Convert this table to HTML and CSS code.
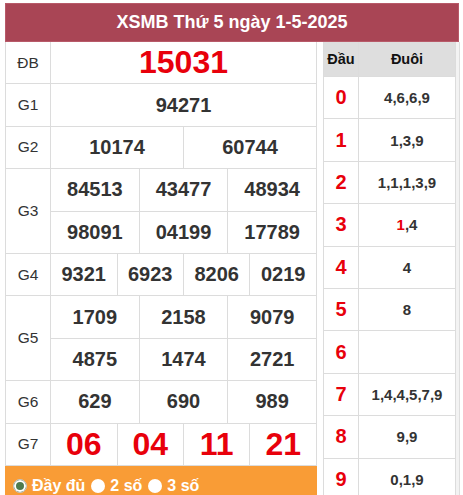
FILE: index.html
```html
<!DOCTYPE html>
<html lang="vi">
<head>
<meta charset="utf-8">
<title>XSMB</title>
<link rel="stylesheet" href="styles.css">
</head>
<body>
<div class="wrap">
  <div class="title">XSMB Thứ 5 ngày 1-5-2025</div>
  <div class="content">
    <div class="left">
      <div class="kq">
        <div class="lbl">ĐB</div>
        <div class="num db s12">15031</div>

        <div class="lbl">G1</div>
        <div class="num s12">94271</div>

        <div class="lbl">G2</div>
        <div class="num s6">10174</div>
        <div class="num s6">60744</div>

        <div class="lbl r2">G3</div>
        <div class="num s4">84513</div>
        <div class="num s4">43477</div>
        <div class="num s4">48934</div>
        <div class="num s4">98091</div>
        <div class="num s4">04199</div>
        <div class="num s4">17789</div>

        <div class="lbl">G4</div>
        <div class="num s3">9321</div>
        <div class="num s3">6923</div>
        <div class="num s3">8206</div>
        <div class="num s3">0219</div>

        <div class="lbl r2">G5</div>
        <div class="num s4">1709</div>
        <div class="num s4">2158</div>
        <div class="num s4">9079</div>
        <div class="num s4">4875</div>
        <div class="num s4">1474</div>
        <div class="num s4">2721</div>

        <div class="lbl">G6</div>
        <div class="num s4">629</div>
        <div class="num s4">690</div>
        <div class="num s4">989</div>

        <div class="lbl">G7</div>
        <div class="num g7 s3">06</div>
        <div class="num g7 s3">04</div>
        <div class="num g7 s3">11</div>
        <div class="num g7 s3">21</div>
      </div>
      <div class="opts">
        <span class="opt"><span class="radio on"></span>Đầy đủ</span>
        <span class="opt"><span class="radio"></span>2 số</span>
        <span class="opt"><span class="radio"></span>3 số</span>
      </div>
    </div>
    <div class="right">
      <div class="lt">
        <div class="th">Đầu</div>
        <div class="th">Đuôi</div>
        <div class="dau">0</div><div class="duoi">4,6,6,9</div>
        <div class="dau">1</div><div class="duoi">1,3,9</div>
        <div class="dau">2</div><div class="duoi">1,1,1,3,9</div>
        <div class="dau">3</div><div class="duoi"><span class="red">1</span>,4</div>
        <div class="dau">4</div><div class="duoi">4</div>
        <div class="dau">5</div><div class="duoi">8</div>
        <div class="dau">6</div><div class="duoi"></div>
        <div class="dau">7</div><div class="duoi">1,4,4,5,7,9</div>
        <div class="dau">8</div><div class="duoi">9,9</div>
        <div class="dau">9</div><div class="duoi">0,1,9</div>
      </div>
    </div>
  </div>
</div>
</body>
</html>
```

FILE: styles.css
```css
html, body {
  margin: 0;
  padding: 0;
  background: #fff;
}
body {
  font-family: "Liberation Sans", Arial, sans-serif;
  color: #333;
  overflow: hidden;
}
.wrap {
  padding: 3px 0 0 5px;
  width: 454px;
}
.title {
  background: #a94555;
  color: #fff;
  font-weight: bold;
  font-size: 18px;
  height: 39px;
  line-height: 39px;
  text-align: center;
  box-shadow: inset 0 0 0 1px #b85a69;
}
.content {
  display: flex;
  gap: 6px;
  align-items: flex-start;
}
.left {
  width: 312px;
}
.kq {
  display: grid;
  grid-template-columns: 44px repeat(12, 1fr);
  grid-template-rows: repeat(10, 41.4px);
  gap: 1px;
  padding: 0 1px 1px 1px;
  background: #dcdcdc;
}
.kq > div {
  background: #fff;
  display: flex;
  align-items: center;
  justify-content: center;
}
.lbl {
  grid-column: 1;
  font-size: 15.5px;
  color: #333;
}
.lbl.r2 { grid-row: span 2; }
.num {
  font-size: 20px;
  font-weight: bold;
  color: #333;
}
.s12 { grid-column: span 12; }
.s6 { grid-column: span 6; }
.s4 { grid-column: span 4; }
.s3 { grid-column: span 3; }
.db, .g7 {
  color: #e8000b;
  font-size: 32px;
}
.opts {
  background: #f99c36;
  height: 40px;
  display: flex;
  align-items: center;
  gap: 6px;
  padding-left: 8px;
  color: #fff;
  font-weight: bold;
  font-size: 16px;
}
.opt {
  display: inline-flex;
  align-items: center;
  gap: 5px;
}
.radio {
  width: 14px;
  height: 14px;
  border-radius: 50%;
  background: #fff;
  box-sizing: border-box;
}
.radio.on {
  border: 1px solid #c9c9c9;
  background: #4e7b4f;
  box-shadow: inset 0 0 0 2px #fff;
}
.right {
  width: 133px;
  border-right: 3px solid #f3f3f3;
  box-shadow: 1px 0 0 #dedede;
}
.lt {
  display: grid;
  grid-template-columns: 34px 1fr;
  grid-template-rows: 34px repeat(10, 41.4px);
  gap: 1px;
  padding: 0 1px 1px 1px;
  background: #dcdcdc;
}
.lt > div {
  background: #fff;
  display: flex;
  align-items: center;
  justify-content: center;
  font-weight: bold;
}
.lt > .th {
  background: #dedede;
  color: #111;
  font-size: 14.5px;
}
.dau {
  color: #e8000b;
  font-size: 20px;
}
.duoi {
  color: #333;
  font-size: 15px;
}
.red { color: #e8000b; }
```
